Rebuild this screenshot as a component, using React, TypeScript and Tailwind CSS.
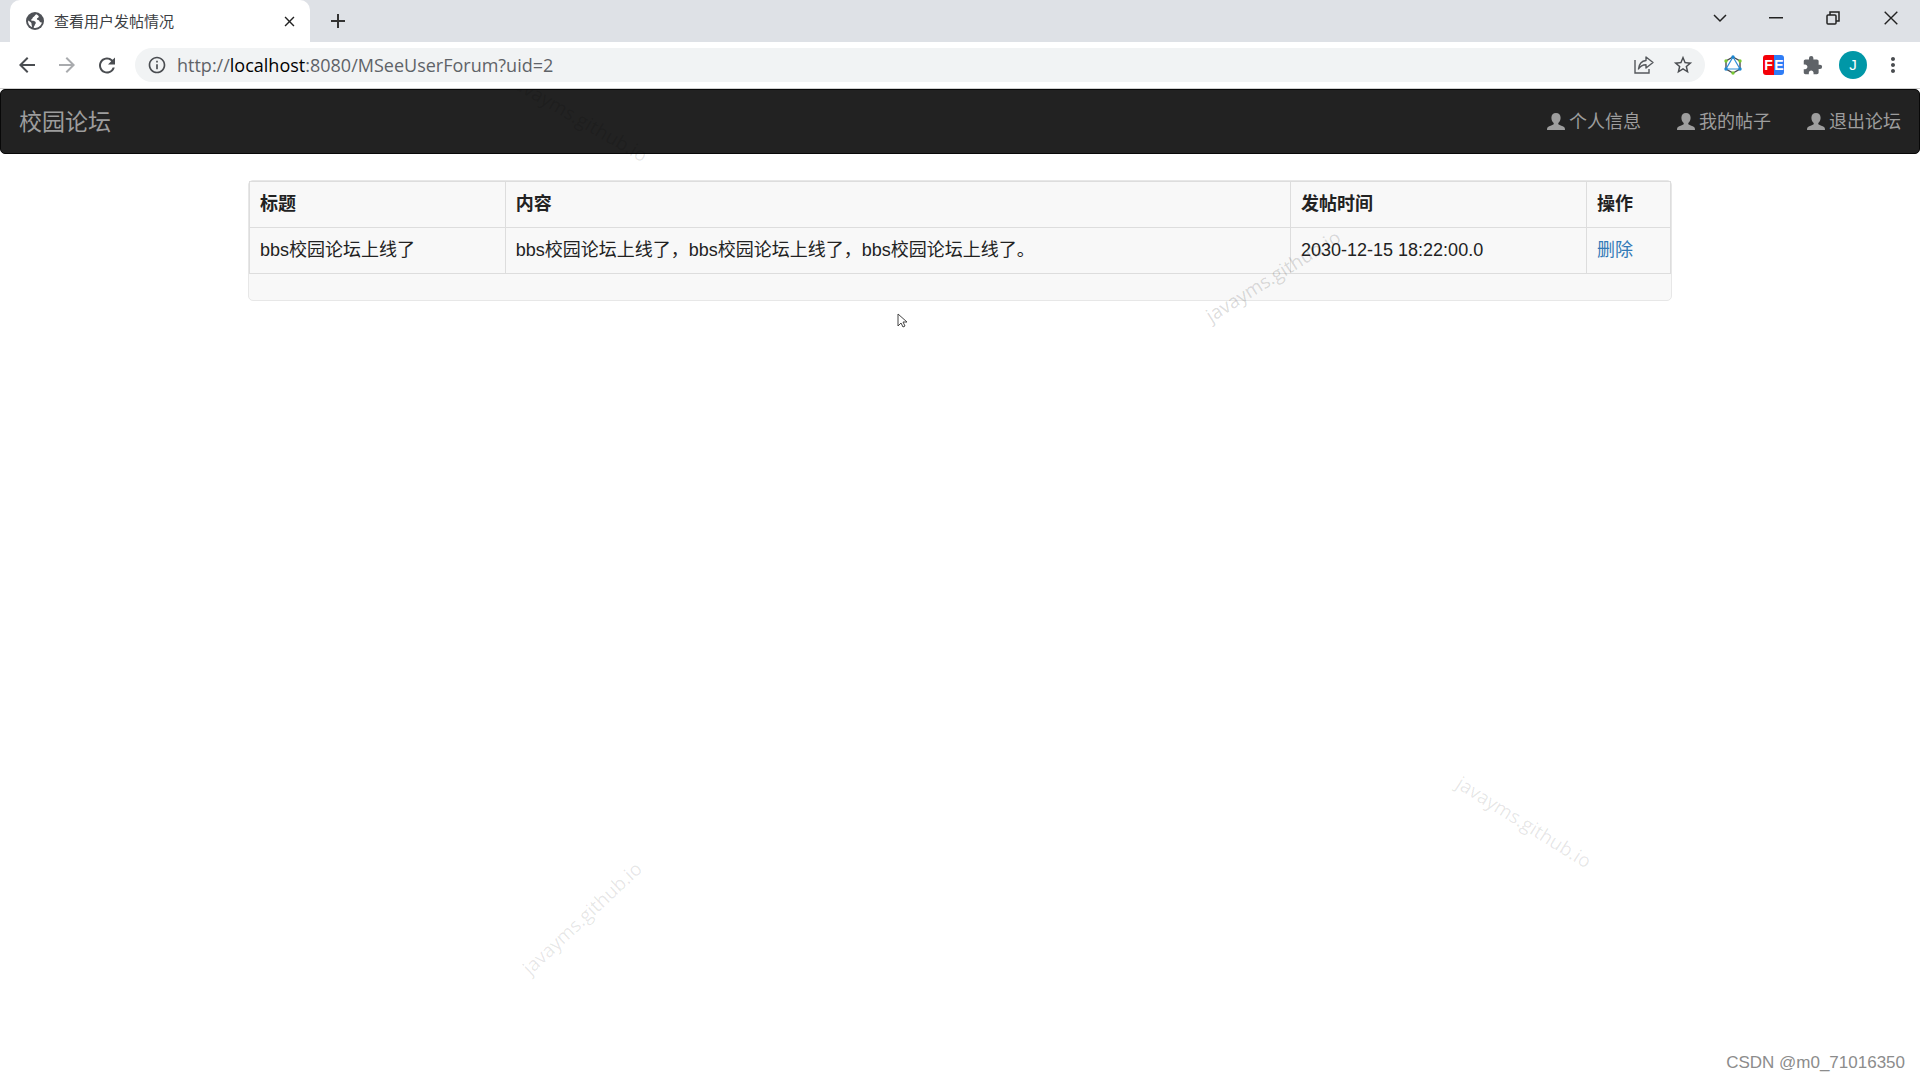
import type { ReactNode } from "react";
import {
  MdAdd,
  MdArrowBack,
  MdArrowForward,
  MdClose,
  MdExtension,
  MdInfoOutline,
  MdMoreVert,
  MdRefresh,
  MdStarBorder,
} from "react-icons/md";

const posts = [
  {
    title: "bbs校园论坛上线了",
    content: "bbs校园论坛上线了，bbs校园论坛上线了，bbs校园论坛上线了。",
    time: "2030-12-15 18:22:00.0",
  },
];

const navItems = ["个人信息", "我的帖子", "退出论坛"];

function IconButton({ label, className = "", children }: { label: string; className?: string; children: ReactNode }) {
  return (
    <button type="button" aria-label={label} className={`flex shrink-0 items-center justify-center text-[#4a4d51] ${className}`}>
      {children}
    </button>
  );
}

function WindowControls() {
  return (
    <div className="flex h-9 text-[#222]">
      <IconButton label="搜索标签页" className="w-14">
        <svg width="14" height="9" viewBox="0 0 14 9" fill="none" stroke="#222" strokeWidth="1.5"><path d="M1 1l6 6 6-6" /></svg>
      </IconButton>
      <IconButton label="最小化" className="w-14">
        <svg width="14" height="2" viewBox="0 0 14 2" fill="#222"><path d="M0 0h14v1.5H0z" /></svg>
      </IconButton>
      <IconButton label="还原" className="w-[58px]">
        <svg width="14" height="14" viewBox="0 0 14 14" fill="none" stroke="#222" strokeWidth="1.5"><rect x="1" y="4" width="9" height="9" rx="1" /><path d="M4 4V1h9v9h-3" /></svg>
      </IconButton>
      <IconButton label="关闭" className="w-[58px]">
        <svg width="14" height="14" viewBox="0 0 14 14" fill="none" stroke="#222" strokeWidth="1.4"><path d="M.7.7l12.6 12.6M13.3.7L.7 13.3" /></svg>
      </IconButton>
    </div>
  );
}

function GlobeIcon() {
  return (
    <svg width="18" height="18" viewBox="0 0 18 18" className="shrink-0">
      <circle cx="9" cy="9" r="9" fill="#4f5257" />
      <path d="M10.500 2.300c-1.800.4-1.300 1.900-2.700 2.400-1.500.5-1 2-2.200 2.500-1 .4-.6 1.500.6 1.600 1.800.1 3.400.3 3.600 1.900.1 1-1 1.300-1 2.300 0 .9-1 1.100-1.100 2.700 3.600.9 7.600-1.500 8.200-5.400-1.200.5-2.200-.2-2.500-1.200-.4-1.300-2.400-.5-2.500-2-.1-1.300 1.700-1 1.900-2.300.1-.9-1-1.300-2.300-2.500z" fill="#fff" />
      <path d="M2.100 8.500c1.300.5 2 1.300 2.900 2 .9.800.3 2 .8 2.900.3.600.4 1.200.1 1.700C3.400 13.900 1.700 11.300 2.100 8.500z" fill="#fff" />
    </svg>
  );
}

function TabStrip() {
  return (
    <div className="flex h-[42px] items-start bg-[#dee1e6] pl-[10px]">
      <div className="flex h-full w-[300px] items-center rounded-t-[10px] bg-white pr-3 pl-4">
        <GlobeIcon />
        <span className="ml-[10px] flex-1 pt-[2px] text-[15px] text-[#3c4043]">查看用户发帖情况</span>
        <IconButton label="关闭标签页"><MdClose size={17} color="#222" /></IconButton>
      </div>
      <IconButton label="新标签页" className="ml-4 h-full w-6"><MdAdd size={24} color="#333" /></IconButton>
      <div className="ml-auto"><WindowControls /></div>
    </div>
  );
}

function Toolbar() {
  return (
    <div className="flex h-[47px] items-center border-b border-[#cfcfcf] bg-white px-[15px]">
      <IconButton label="后退" className="w-6"><MdArrowBack size={24} /></IconButton>
      <IconButton label="前进" className="ml-4 w-6"><MdArrowForward size={24} color="#a9abae" /></IconButton>
      <IconButton label="刷新" className="ml-4 w-6"><MdRefresh size={25} /></IconButton>
      <div className="ml-4 flex h-[34px] flex-1 items-center rounded-full bg-[#f1f3f4] pr-[11px] pl-3">
        <MdInfoOutline size={20} color="#4a4d51" />
        <button type="button" className="ml-[10px] flex-1 text-left font-['Open_Sans','Noto_Sans_CJK_SC',sans-serif] text-[18px] text-[#5f6368]">
          http://<span className="text-black">localhost</span>:8080/MSeeUserForum?uid=2
        </button>
        <IconButton label="分享">
          <svg width="20" height="18" viewBox="0 0 20 18" fill="none" stroke="#55585c" strokeWidth="1.4"><path d="M1 4v13h14v-4" /><path d="M12 1l7 5.500-7 5.500V8.800C8 8.800 6 10.500 4.500 13 5 8.500 7.500 5 12 4.500z" strokeLinejoin="round" /></svg>
        </IconButton>
        <IconButton label="收藏" className="ml-[18px]"><MdStarBorder size={22} /></IconButton>
      </div>
      <IconButton label="GraphQL 扩展" className="ml-[18px]">
        <svg width="20" height="20" viewBox="0 0 20 20" fill="none"><path d="M10 2l7 4v8l-7 4-7-4V6z" stroke="#4a4d51" strokeWidth="1.400" /><path d="M10 2l7 12H3z" stroke="#2f8fd8" strokeWidth="1.200" /><g fill="#1b87d2"><circle cx="10" cy="2" r="1.700" /><circle cx="17" cy="14" r="1.700" /><circle cx="3" cy="14" r="1.700" /></g><g fill="#78c832"><circle cx="17" cy="6" r="1.700" /><circle cx="10" cy="18" r="1.700" /><circle cx="3" cy="6" r="1.700" /></g></svg>
      </IconButton>
      <button type="button" className="ml-5 flex h-5 w-[21px] shrink-0 overflow-hidden rounded-[3px] text-[14px] leading-5 font-black text-white">
        <span className="w-[11px] bg-[#f40009] text-center">F</span>
        <span className="w-[10px] bg-[#2f7df6] text-center">E</span>
      </button>
      <IconButton label="扩展程序" className="ml-[18px]"><MdExtension size={21} color="#5f6368" /></IconButton>
      <button type="button" className="ml-4 h-7 w-7 shrink-0 rounded-full bg-[#0097a7] text-[15px] leading-7 text-white">J</button>
      <IconButton label="菜单" className="ml-[14px]"><MdMoreVert size={24} /></IconButton>
    </div>
  );
}

function UserIcon() {
  return (
    <svg width="18" height="17" viewBox="0 0 18 17" fill="currentColor" className="mb-[3px] shrink-0">
      <path d="M9 0c2.900 0 4.600 1.800 4.600 4.700 0 2-.8 4.100-2.300 5.200v1.300c1.800 1 4.300 1.800 5.700 2.700.7.500 1 1.300 1 3.100H0c0-1.800.3-2.600 1-3.100 1.400-.9 3.900-1.700 5.700-2.700V9.900C5.200 8.800 4.400 6.700 4.400 4.700 4.400 1.800 6.100 0 9 0z" />
    </svg>
  );
}

function Navbar() {
  return (
    <nav className="flex h-[65px] items-center justify-between rounded-[5px] border border-[#080808] bg-[#222] px-[18px] pt-[2px] text-[#9d9d9d]">
      <a href="#" className="text-[23px]">校园论坛</a>
      <ul className="flex gap-9 text-[18px]">
        {navItems.map((item) => (
          <li key={item}>
            <a href="#" className="flex items-center gap-1"><UserIcon />{item}</a>
          </li>
        ))}
      </ul>
    </nav>
  );
}

function PostTable() {
  const cell = "border border-[#ddd] px-[10px] py-[10px] text-left";
  return (
    <table className="w-full table-fixed border-collapse text-[#222]">
      <colgroup>
        <col className="w-[18%]" />
        <col />
        <col className="w-[296px]" />
        <col className="w-[84px]" />
      </colgroup>
      <thead>
        <tr className="font-bold">
          <th className={cell}>标题</th>
          <th className={cell}>内容</th>
          <th className={cell}>发帖时间</th>
          <th className={cell}>操作</th>
        </tr>
      </thead>
      <tbody>
        {posts.map((post) => (
          <tr key={post.time}>
            <td className={cell}>{post.title}</td>
            <td className={cell}>{post.content}</td>
            <td className={cell}>{post.time}</td>
            <td className={cell}><a href="#" className="text-[#337ab7]">删除</a></td>
          </tr>
        ))}
      </tbody>
    </table>
  );
}

function Watermark({ className }: { className: string }) {
  return (
    <span className={`pointer-events-none absolute w-40 text-center font-['Open_Sans',sans-serif] text-[19px] leading-6 ${className}`}>
      javayms.github.io
    </span>
  );
}

export default function App() {
  return (
    <div className="flex min-h-screen flex-col bg-white font-['Liberation_Sans','Noto_Sans_CJK_SC',sans-serif]">
      <TabStrip />
      <Toolbar />
      <div className="relative flex flex-1 flex-col overflow-hidden">
        <Navbar />
        <main className="mx-auto mt-[26px] w-full max-w-[1424px]">
          <div className="rounded-[5px] border border-[#e7e7e7] bg-[#f8f8f8] pb-[26px] text-[18px] leading-[25px]">
            <PostTable />
          </div>
        </main>
        <footer className="mt-auto mr-[15px] mb-[5px] self-end text-[17px] text-[#8c8c8c]">CSDN @m0_71016350</footer>

        <Watermark className="top-[17px] left-[499px] rotate-[30deg] text-black/10" />
        <Watermark className="top-[175px] left-[1193px] -rotate-[32deg] text-black/15" />
        <Watermark className="top-[817px] left-[502px] -rotate-[43deg] text-black/10" />
        <Watermark className="top-[721px] left-[1444px] rotate-[32deg] text-black/10" />
        <svg className="absolute top-[224px] left-[897px]" width="12" height="16" viewBox="0 0 12 16" fill="#fff" stroke="#444" strokeWidth="1">
          <path d="M1 1v12l3-3 2 4 2-1-2-4h4z" />
        </svg>
      </div>
    </div>
  );
}
